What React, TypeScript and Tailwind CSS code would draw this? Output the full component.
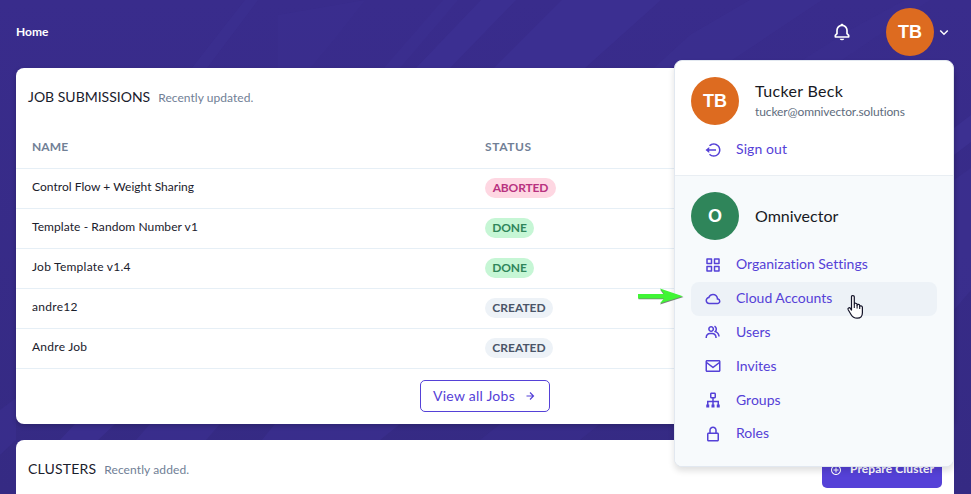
import type { ReactNode } from "react";
import type { IconType } from "react-icons";
import {
  BiBell,
  BiChevronDown,
  BiCloud,
  BiEnvelope,
  BiGridAlt,
  BiGroup,
  BiLockAlt,
  BiLogOutCircle,
  BiPlusCircle,
  BiRightArrowAlt,
  BiSitemap,
} from "react-icons/bi";

type Status = "ABORTED" | "DONE" | "CREATED";

const badgeStyles: Record<Status, string> = {
  ABORTED: "bg-[#fed7e2] text-[#b83280] w-[71px] tracking-[-0.15px]",
  DONE: "bg-[#c6f6d5] text-[#2f855a] w-[49px] tracking-[-0.15px]",
  CREATED: "bg-[#edf2f7] text-[#4a5568] w-[68px]",
};

const jobs: { name: string; status: Status; tracking: string }[] = [
  { name: "Control Flow + Weight Sharing", status: "ABORTED", tracking: "tracking-[0.03px]" },
  { name: "Template - Random Number v1", status: "DONE", tracking: "tracking-[0.08px]" },
  { name: "Job Template v1.4", status: "DONE", tracking: "tracking-[0.24px]" },
  { name: "andre12", status: "CREATED", tracking: "tracking-[0.3px]" },
  { name: "Andre Job", status: "CREATED", tracking: "tracking-[0.25px]" },
];

const menu: { label: string; icon: IconType; active?: boolean }[] = [
  { label: "Organization Settings", icon: BiGridAlt },
  { label: "Cloud Accounts", icon: BiCloud, active: true },
  { label: "Users", icon: BiGroup },
  { label: "Invites", icon: BiEnvelope },
  { label: "Groups", icon: BiSitemap },
  { label: "Roles", icon: BiLockAlt },
];

function Backdrop() {
  return (
    <svg className="absolute inset-0 h-full w-full" viewBox="0 0 971 494" preserveAspectRatio="none">
      <defs>
        <linearGradient id="base" x1="0" y1="0" x2="0" y2="1">
          <stop offset="0" stopColor="#392c8c" />
          <stop offset="1" stopColor="#352a83" />
        </linearGradient>
      </defs>
      <rect width="971" height="494" fill="url(#base)" />
      <g fill="#3c3091">
        <path d="M245 0H258L207 68H192Z" opacity=".6" />
        <path d="M278 15L365 0L332 42L310 68H278Z" opacity=".35" />
        <path d="M443 0H458L400 68H384Z" opacity=".5" />
        <path d="M481 0H516L450 68H416Z" opacity=".9" />
        <path d="M562 0H661L585 68H494Z" opacity=".9" />
        <path d="M690 35L750 0H822L720 68H654Z" opacity=".6" />
        <path d="M850 30L905 0H930L830 68H790Z" opacity=".35" />
        <path d="M954 128L971 115V142L954 155Z" />
        <path d="M954 180L971 168V290L954 310Z" opacity=".6" />
        <path d="M0 410L16 398V440L0 455Z" opacity=".5" />
        <path d="M75 424H115L98 440H60Z" opacity=".8" />
        <path d="M150 424H220L206 440H136Z" opacity=".6" />
        <path d="M275 424H400L380 440H262Z" opacity=".6" />
        <path d="M500 424H600L580 440H480Z" opacity=".4" />
      </g>
    </svg>
  );
}

function Avatar({ initials, color }: { initials: string; color: string }) {
  return (
    <div
      className={`flex size-12 shrink-0 items-center justify-center rounded-full font-['Liberation_Sans',sans-serif] text-[18px] font-bold text-white ${color}`}
    >
      {initials}
    </div>
  );
}

function CardHeader({ title, note, children }: { title: ReactNode; note: ReactNode; children?: ReactNode }) {
  return (
    <div className="flex h-[59px] shrink-0 items-center px-3">
      <h2 className="pb-[3px] text-[#1a202c]">{title}</h2>
      <p className="ml-2 pb-[4px] text-[#718096]">{note}</p>
      {children}
    </div>
  );
}

function Pointer() {
  return (
    <svg className="absolute left-[846px] top-[294px]" width="19" height="26" viewBox="0 0 19 26">
      <path
        d="M5.500 2.500c0-1.300 2.800-1.300 2.800.2V10c0-1.200 2.800-1 2.800.4v.8c0-1.200 2.600-1 2.600.4v.8c0-1.100 2.700-.8 2.700.8v5.500c0 3.300-2 5.500-5.200 5.500-3 0-4.700-1-6.200-3.700L2.200 15.800c-.9-1.700 1.200-2.900 2.300-1.200l1 1.500z"
        fill="#fff"
        stroke="#15152a"
        strokeWidth="1.200"
        strokeLinejoin="round"
      />
      <path d="M8.300 10v4M11.100 11v3.500M13.700 12v3" stroke="#15152a" strokeWidth="1.100" />
    </svg>
  );
}

function MarkerArrow() {
  return (
    <svg className="absolute left-[636px] top-[286px]" width="50" height="22" viewBox="0 0 50 22">
      <path d="M2.500 9H28L24 3.500L47.500 11L24 18.500L28 13.300H2.500Z" fill="#5f6b5f" opacity=".85" />
      <path d="M2 8H28L24 2.500L46.800 10.300L23.800 17.600L28 12.400H2Z" fill="#40f535" />
    </svg>
  );
}

export default function App() {
  return (
    <div className="relative flex h-[494px] w-[971px] flex-col overflow-hidden bg-[#382b89] font-['Lato','Noto_Sans',sans-serif] [font-variant-ligatures:none]">
      <Backdrop />

      <header className="relative flex h-[68px] shrink-0 items-center pl-4 pr-[18px] pb-1 text-white">
        <span className="text-[12px] font-bold">Home</span>
        <BiBell className="ml-auto mr-[34px]" size={20} />
        <Avatar initials="TB" color="bg-[#dd6b20]" />
        <BiChevronDown className="ml-px" size={18} />
      </header>

      <main className="relative flex w-[954px] flex-col gap-4 pl-4">
        <section className="flex h-[356px] flex-col rounded-lg bg-white shadow-[0_2px_5px_rgba(0,0,0,0.2)]">
          <CardHeader
            title={<span className="text-[14px]">JOB SUBMISSIONS</span>}
            note={<span className="text-[12px] tracking-[0.050px]">Recently updated.</span>}
          />
          <div className="flex h-[42px] items-center border-b border-[#e6eff6] px-4 pb-[2px] text-[12px] font-bold text-[#718096]">
            <span className="w-[453px] tracking-[0.1px]">NAME</span>
            <span className="tracking-[0.6px]">STATUS</span>
          </div>
          {jobs.map((job) => (
            <div key={job.name} className="flex h-10 items-center border-b border-[#e6eff6] px-4 pb-px text-[12px] text-[#1a202c]">
              <span className="w-[453px] pb-[3px]">
                <span className={job.tracking}>{job.name}</span>
              </span>
              <span className={`flex h-5 items-center justify-center rounded-full text-[12px] font-bold ${badgeStyles[job.status]}`}>
                {job.status}
              </span>
            </div>
          ))}
          <button className="ml-[404px] mt-[11px] flex h-8 w-[130px] items-center rounded-[5px] border border-[#5541d7] pl-3 text-[14px] text-[#5541d7]">
            <span className="pb-[2px] tracking-[0.25px]">View all Jobs</span>
            <BiRightArrowAlt className="ml-auto mr-3" size={14} />
          </button>
        </section>

        <section className="h-[80px] rounded-t-lg bg-white">
          <CardHeader
            title={<span className="text-[14px] tracking-[0.18px]">CLUSTERS</span>}
            note={<span className="text-[12px] tracking-[0.1px]">Recently added.</span>}
          >
            <button className="ml-auto mt-[5px] flex h-8 w-[120px] items-center rounded-[5px] bg-[#5541d7] pl-2 text-[12px] font-bold text-white">
              <BiPlusCircle className="mb-1" size={12} />
              <span className="ml-2 pb-[6px] tracking-[0.080px]">Prepare Cluster</span>
            </button>
          </CardHeader>
        </section>
      </main>

      <aside className="absolute left-[674px] top-[60px] flex h-[407px] w-[280px] flex-col overflow-hidden rounded-lg border border-[#e2e8f0] bg-white shadow-[0_4px_6px_rgba(0,0,0,0.12)]">
        <div className="flex h-[115px] flex-col border-b border-[#e9eef3] px-4 pt-4">
          <div className="flex items-center">
            <Avatar initials="TB" color="bg-[#dd6b20]" />
            <div className="ml-4 flex flex-col">
              <span className="text-[16px] leading-[20px] tracking-[0.35px] text-[#171923]">Tucker Beck</span>
              <span className="mt-[2px] text-[12px] leading-[18px] tracking-[-0.11px] text-[#606c7d]">tucker@omnivector.solutions</span>
            </div>
          </div>
          <a className="mt-[7px] flex h-[34px] items-center pl-[13px] text-[14px] text-[#5541d7]">
            <BiLogOutCircle className="mt-px" size={18} />
            <span className="ml-[14px] pb-px tracking-[0.1px]">Sign out</span>
          </a>
        </div>
        <div className="flex flex-1 flex-col bg-[#f7fafc] px-4 pt-4">
          <div className="mb-2 flex items-center">
            <Avatar initials="O" color="bg-[#2f855a]" />
            <span className="ml-4 pb-px text-[16px] text-[#171923]">Omnivector</span>
          </div>
          {menu.map(({ label, icon: Icon, active }) => (
            <a
              key={label}
              className={`flex h-[33.800px] w-[246px] items-center rounded-lg pl-[13px] text-[14px] text-[#5541d7] ${active ? "bg-[#edf2f7]" : ""}`}
            >
              <Icon size={18} />
              <span className="ml-[14px] pb-[2px]">{label}</span>
            </a>
          ))}
        </div>
      </aside>

      <MarkerArrow />
      <Pointer />
    </div>
  );
}
